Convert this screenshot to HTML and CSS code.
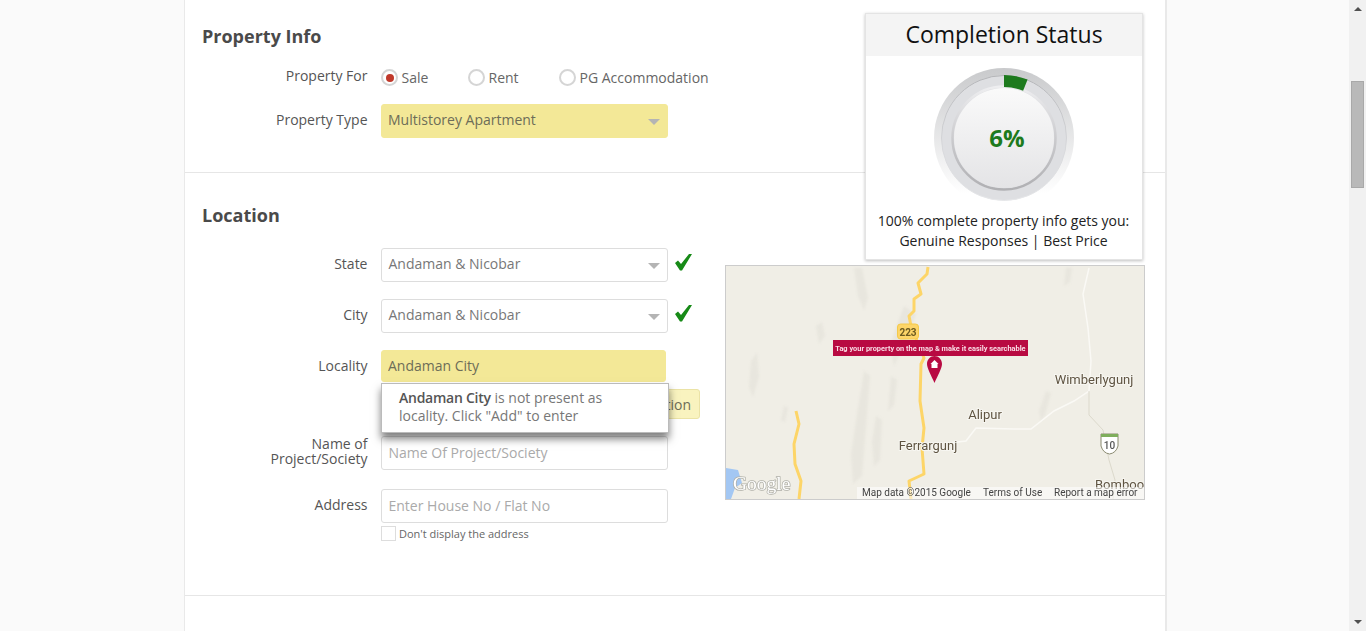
FILE: index.html
```html
<!DOCTYPE html>
<html lang="en">
<head>
    <meta charset="UTF-8">
    <meta name="viewport" content="width=device-width, initial-scale=1.0">
    <title>Post Property</title>
    <link rel="stylesheet" href="styles.css">
</head>
<body>
    <div class="viewport">
        <div class="sheet">
            <section class="section info-section">
                <h2>Property Info</h2>
                <div class="row radio-row">
                    <label class="label">Property For</label>
                    <div class="radios">
                        <span class="radio radio-sale"><i class="dot on"></i>Sale</span>
                        <span class="radio radio-rent"><i class="dot"></i>Rent</span>
                        <span class="radio"><i class="dot"></i>PG Accommodation</span>
                    </div>
                </div>
                <div class="row type-row">
                    <label class="label">Property Type</label>
                    <div class="select filled">Multistorey Apartment<i class="caret"></i></div>
                </div>
            </section>

            <section class="section location-section">
                <div class="location-form">
                    <h2>Location</h2>
                    <div class="row first-row">
                        <label class="label">State</label>
                        <div class="select">Andaman &amp; Nicobar<i class="caret"></i></div>
                        <svg class="check" width="18" height="17" viewBox="0 0 18 17"><path d="M1 9l3-2.500 3 3.500L15 0h3L8 16.500H6z" fill="#178a17"/></svg>
                    </div>
                    <div class="row">
                        <label class="label">City</label>
                        <div class="select">Andaman &amp; Nicobar<i class="caret"></i></div>
                        <svg class="check" width="18" height="17" viewBox="0 0 18 17"><path d="M1 9l3-2.500 3 3.500L15 0h3L8 16.500H6z" fill="#178a17"/></svg>
                    </div>
                    <div class="row locality-row">
                        <label class="label locality-label">Locality</label>
                        <input class="input filled locality-input" type="text" value="Andaman City">
                        <div class="suggest"><b>Andaman City</b> is not present as locality. Click "Add" to enter</div>
                    </div>
                    <div class="add-row"><button class="add-btn">Add Location</button></div>
                    <div class="row">
                        <label class="label two-line">Name of Project/Society</label>
                        <input class="input" type="text" placeholder="Name Of Project/Society">
                    </div>
                    <div class="row address-row">
                        <label class="label">Address</label>
                        <input class="input" type="text" placeholder="Enter House No / Flat No">
                    </div>
                    <div class="hide-address"><i class="box"></i>Don't display the address</div>
                </div>

                <div class="map">
                    <svg width="418" height="233" viewBox="0 0 418 233">
                        <rect width="418" height="233" fill="#f0eee6"/>
                        <g class="terrain">
                            <path d="M128 2l8 0 6 30-4 12-6-14z"/>
                            <path d="M138 105l6 5-4 50-4 50-9 8-2-30 6-40z"/>
                            <path d="M165 110l6 4-3 25-6 6z"/>
                            <path d="M178 40l12 8-8 24-14 28-4-20 8-24z"/>
                            <path d="M90 60l6-4 3 14-6 8z"/>
                            <path d="M320 125l5 2-6 22-4 6-2-10z"/>
                            <path d="M340 2l6 0-2 14-6 4z"/>
                            <path d="M58 140l4 2-3 14-4-2z"/>
                            <path d="M150 150l6 4-2 40-6 6-2-24z"/>
                            <path d="M25 95l6-8 2 24-6 20-4-10z"/>
                        </g>
                        <path d="M0 202l12 2 4 13-7 5-4 11H0z" fill="#a3c7f3"/>
                        <path d="M363 2l-6 26 5 34 3 33-2 30-15 10-20 10-23 18-17 0-38-1-10 13-18 2" fill="none" stroke="#faf9f5" stroke-width="1.500"/>
                        <path d="M363 125l0 24 14 15 6 30 6 20-2 19" fill="none" stroke="#dcd9cc" stroke-width="1"/>
                        <g fill="none" stroke="#fdd568" stroke-width="3" stroke-linejoin="round">
                            <path d="M202 1l-1 7-9 9 3 11-7 5 0 12-5 5 2 10 13 32-3 6-1 37 4 27-2 20 2 26-15 7 2 18"/>
                            <path d="M70 145l3 13-5 20 1 20 6 17-2 18"/>
                        </g>
                        <rect x="171.500" y="58" width="21" height="15" rx="3" fill="#fdd568" stroke="#f4c94a"/>
                        <text class="map-shield" x="182" y="70" text-anchor="middle">223</text>
                        <text class="map-place" x="368" y="118" text-anchor="middle">Wimberlygunj</text>
                        <text class="map-place" x="259" y="153" text-anchor="middle">Alipur</text>
                        <text class="map-place" x="202" y="184" text-anchor="middle">Ferrargunj</text>
                        <text class="map-place" x="369" y="223">Bomboo</text>
                        <path d="M375 168h17v12q-2 7-8.500 8q-6.500-1-8.500-8z" fill="#fff" stroke="#8a8a70"/>
                        <path d="M375 168h17v3h-17z" fill="#7fae5c"/>
                        <text class="map-shield small" x="383.500" y="183" text-anchor="middle">10</text>
                        <rect x="131" y="221" width="287" height="12" fill="#fff" fill-opacity="0.55"/>
                        <text class="map-attr" x="136" y="230">Map data ©2015 Google</text>
                        <text class="map-attr" x="257" y="230">Terms of Use</text>
                        <text class="map-attr" x="328" y="230">Report a map error</text>
                        <text class="map-logo" x="7" y="224">Google</text>
                        <rect x="107" y="74" width="195" height="16" fill="#b80a42"/>
                        <text class="map-tag" x="204.500" y="85" text-anchor="middle">Tag your property on the map &amp; make it easily searchable</text>
                        <path d="M208.500 90c-4 0-7.500 3.500-7.500 8 0 4 4.500 12 7.500 19 3-7 7.500-15 7.500-19 0-4.500-3.500-8-7.500-8z" fill="#b80a42"/>
                        <path d="M208.500 94l-4 4h1v4h6v-4h1z" fill="#fff"/>
                    </svg>
                </div>
            </section>

            <div class="status-card">
                <div class="status-title">Completion Status</div>
                <svg class="gauge" width="140" height="140" viewBox="0 0 140 140">
                    <defs>
                        <linearGradient id="outerGrad" x1="0" y1="0" x2="0" y2="1">
                            <stop offset="0" stop-color="#c9cacc"/>
                            <stop offset="0.9" stop-color="#ffffff"/>
                        </linearGradient>
                        <linearGradient id="ringEdge" x1="0" y1="0" x2="0" y2="1">
                            <stop offset="0" stop-color="#b4b5b8"/>
                            <stop offset="0.6" stop-color="#d8d9dc"/>
                            <stop offset="1" stop-color="#e6e7e9"/>
                        </linearGradient>
                        <linearGradient id="innerGrad" x1="0" y1="0" x2="0" y2="1">
                            <stop offset="0" stop-color="#fafafa"/>
                            <stop offset="1" stop-color="#e4e4e6"/>
                        </linearGradient>
                        <linearGradient id="innerEdge" x1="0" y1="0" x2="0" y2="1">
                            <stop offset="0" stop-color="#eeeef0"/>
                            <stop offset="0.5" stop-color="#cbcbce"/>
                            <stop offset="1" stop-color="#b0b0b3"/>
                        </linearGradient>
                    </defs>
                    <circle cx="70" cy="70" r="70" fill="url(#outerGrad)"/>
                    <circle cx="70" cy="70" r="62.500" fill="#dedfe2" stroke="url(#ringEdge)"/>
                    <circle cx="70" cy="70" r="51.500" fill="none" stroke="url(#innerEdge)" stroke-width="2.500"/>
                    <path d="M70 7A63 63 0 0 1 93.600 11.600L89.100 22.700A51 51 0 0 0 70 19z" fill="#1d7a1d"/>
                    <circle cx="70" cy="70" r="50" fill="url(#innerGrad)"/>
                    <text class="gauge-text" x="73" y="79" text-anchor="middle">6%</text>
                </svg>
                <p class="status-note">100% complete property info gets you:<br>Genuine Responses | Best Price</p>
            </div>
        </div>
    </div>
    <div class="scrollbar">
        <i class="arrow up"></i>
        <div class="thumb"></div>
        <i class="arrow down"></i>
    </div>
</body>
</html>
```

FILE: styles.css
```css
html, body {
    height: 100%;
}

body {
    margin: 0;
    display: flex;
    overflow: hidden;
    background-color: #fafafa;
    font-family: "Open Sans", sans-serif;
    font-size: 14px;
    color: #555;
}

.viewport {
    flex: 1;
    height: 631px;
    overflow: hidden;
}

.sheet {
    position: relative;
    box-sizing: border-box;
    width: 983px;
    height: 631px;
    margin-left: 184px;
    background: #fff;
    border-left: 1px solid #e9e9e9;
    border-right: 2px solid #e9e9e9;
}

/* sections */
.section {
    border-bottom: 1px solid #e6e6e6;
}

.info-section {
    height: 173px;
    padding-top: 24px;
    box-sizing: border-box;
}

.location-section {
    display: flex;
    height: 423px;
    box-sizing: border-box;
    padding-top: 30px;
}

.location-form {
    width: 540px;
}

h2 {
    margin: 0 0 0 17px;
    font-size: 18px;
    line-height: 24px;
    font-weight: 700;
    color: #4a4a4a;
}

/* form rows */
.row {
    display: flex;
    align-items: center;
    margin-top: 17px;
}

.radio-row {
    height: 30px;
    margin-top: 14px;
}

.type-row {
    margin-top: 12px;
}

.first-row {
    margin-top: 21px;
}

.address-row {
    margin-top: 19px;
}

.label {
    width: 182.500px;
    margin-right: 13.500px;
    padding-bottom: 2px;
    flex-shrink: 0;
    text-align: right;
    line-height: 20px;
    color: #555;
}

.locality-label {
    padding-bottom: 0;
}

.two-line {
    box-sizing: border-box;
    padding-left: 70px;
    line-height: 15px;
    margin-top: -2px;
}

.radios {
    display: flex;
    padding-top: 1px;
}

.radio {
    display: flex;
    align-items: center;
    color: #666;
}

.radio-sale {
    width: 87px;
}

.radio-rent {
    width: 91px;
}

.dot {
    position: relative;
    box-sizing: border-box;
    width: 17px;
    height: 17px;
    margin-right: 3.500px;
    border: 2px solid #d5d5d5;
    border-radius: 50%;
    background: #fff;
}

.dot.on::after {
    content: "";
    position: absolute;
    left: 2.500px;
    top: 2.500px;
    width: 8px;
    height: 8px;
    border-radius: 50%;
    background: #c0392b;
}

.select, .input {
    box-sizing: border-box;
    display: flex;
    align-items: center;
    position: relative;
    width: 287px;
    height: 34px;
    padding: 0 6px 2px 6.500px;
    border: 1px solid #ddd;
    border-radius: 3px;
    background: #fff;
    font-family: "Open Sans", sans-serif;
    font-size: 14px;
    color: #777;
}

.select {
    padding-bottom: 3px;
}

.input::placeholder {
    color: #aaa;
    opacity: 1;
}

.filled {
    border-color: #f3e897;
    background: #f3e897;
    color: #6d6d58;
    padding-left: 6px;
}

.locality-input {
    width: 285px;
    height: 32px;
}

.caret {
    position: absolute;
    right: 7px;
    top: 14px;
    border-left: 6px solid transparent;
    border-right: 6px solid transparent;
    border-top: 6px solid #b4b4b4;
}

.check {
    margin: -5px 0 0 6px;
}

/* locality suggestion */
.locality-row {
    position: relative;
}

.suggest {
    position: absolute;
    z-index: 2;
    left: 196px;
    top: 33px;
    box-sizing: border-box;
    width: 288px;
    height: 50px;
    padding: 5px 40px 0 17px;
    background: #fff;
    border: 1px solid #bbb;
    box-shadow: 0 6px 8px rgba(0, 0, 0, 0.5);
    line-height: 18px;
    color: #777;
}

.suggest b {
    font-weight: 600;
    letter-spacing: -0.250px;
    color: #555;
}

.add-row {
    display: flex;
    justify-content: flex-end;
    width: 515px;
    margin-top: 7px;
}

.add-btn {
    height: 30px;
    padding: 0 8px;
    border: 1px solid #ebe3a6;
    border-radius: 3px;
    background: #f9f3bf;
    font-family: "Open Sans", sans-serif;
    font-size: 14px;
    color: #6d6d58;
}

.hide-address {
    display: flex;
    align-items: center;
    margin: 3px 0 0 196px;
    font-size: 11px;
    color: #666;
}

.box {
    box-sizing: border-box;
    width: 15px;
    height: 15px;
    margin-right: 3px;
    border: 1px solid #ddd;
}

/* map */
.map {
    width: 420px;
    height: 235px;
    margin-top: 62px;
    box-sizing: border-box;
    border: 1px solid #ccc;
}

.map svg {
    display: block;
    filter: blur(0.4px);
}

.terrain {
    fill: #e8e6de;
    filter: blur(1px);
}

.map-place {
    font-family: Roboto, sans-serif;
    font-size: 13px;
    fill: #5f5442;
    stroke: #f7f6f1;
    stroke-width: 2px;
    paint-order: stroke;
}

.map-shield {
    font-family: Roboto, sans-serif;
    font-size: 10px;
    font-weight: 700;
    fill: #6b5a20;
}

.map-shield.small {
    font-weight: 500;
    fill: #555;
}

.map-attr {
    font-family: Roboto, sans-serif;
    font-size: 10px;
    fill: #444;
}

.map-logo {
    font-family: "Liberation Serif", serif;
    font-size: 19.500px;
    fill: #fff;
    stroke: #b0b0a8;
    stroke-width: 1.500px;
    paint-order: stroke;
}

.map-tag {
    font-family: Roboto, sans-serif;
    font-size: 7.400px;
    font-weight: 700;
    fill: #f9dbe4;
}

/* completion card */
.status-card {
    position: absolute;
    z-index: 3;
    left: 680px;
    top: 13px;
    box-sizing: border-box;
    width: 278px;
    height: 247px;
    background: #fff;
    border: 1px solid #e4e4e4;
    box-shadow: 0 1px 3px rgba(0, 0, 0, 0.25);
    text-align: center;
}

.status-title {
    height: 42px;
    background: #f4f4f4;
    font-size: 23px;
    line-height: 40px;
    color: #111;
}

.gauge {
    display: block;
    margin: 12px auto 0;
}

.gauge-text {
    font-family: "Open Sans", sans-serif;
    font-size: 24px;
    font-weight: 700;
    fill: #1d7a1d;
}

.status-note {
    margin: 3px 0 0;
    padding-right: 1px;
    line-height: 20px;
    color: #222;
}

/* scrollbar */
.scrollbar {
    display: flex;
    flex-direction: column;
    align-items: center;
    width: 17px;
    height: 631px;
    background: #f1f1f1;
}

.arrow {
    border-left: 4px solid transparent;
    border-right: 4px solid transparent;
}

.arrow.up {
    margin-top: 7px;
    border-bottom: 4px solid #505050;
}

.arrow.down {
    margin-top: auto;
    margin-bottom: 7px;
    border-top: 4px solid #505050;
}

.thumb {
    box-sizing: border-box;
    width: 13px;
    height: 107px;
    margin-top: 70px;
    background: #b9b9b9;
    border: 1px solid #a9a9a9;
}
```
